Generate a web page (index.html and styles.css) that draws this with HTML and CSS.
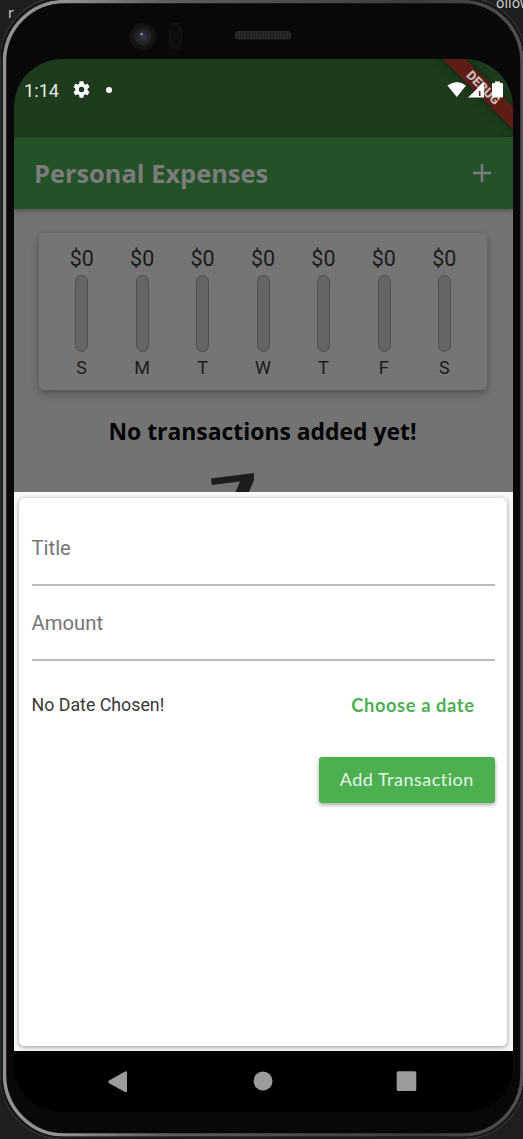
FILE: index.html
```html
<!DOCTYPE html>
<html lang="en">
<head>
<meta charset="utf-8">
<title>Personal Expenses</title>
<link rel="stylesheet" href="styles.css">
</head>
<body>
<div class="stage">
  <svg class="frame" width="523" height="1139" viewBox="0 0 523 1139" fill="none">
    <defs>
      <linearGradient id="rim" x1="0" y1="0" x2="1" y2="0">
        <stop offset="0" stop-color="#929292"/><stop offset=".12" stop-color="#929292"/><stop offset=".3" stop-color="#606060"/><stop offset=".8" stop-color="#3c3c3e"/><stop offset="1" stop-color="#505052"/>
      </linearGradient>
      <radialGradient id="lens"><stop offset="0" stop-color="#3a3b46"/><stop offset=".35" stop-color="#24252b"/><stop offset=".6" stop-color="#222"/><stop offset=".65" stop-color="#161616"/><stop offset="1" stop-color="#121212"/></radialGradient>
      <pattern id="mesh" width="3" height="3" patternUnits="userSpaceOnUse"><rect width="3" height="3" fill="#2b2b2b"/><rect width="1" height="3" fill="#1b1b1b"/></pattern>
    </defs>
    <rect x="0.5" y="-3" width="525" height="1142" rx="62" fill="#08080a" stroke="#45484c"/>
    <rect x="4.500" y="1.500" width="517.500" height="1133.500" rx="60" fill="#08080b" stroke="url(#rim)" stroke-width="3.500"/>
    <rect x="1.500" y="-1" width="523" height="1138.500" rx="61" stroke="#17191b" stroke-width="2"/>
    <circle cx="143" cy="36.500" r="13.500" fill="url(#lens)"/>
    <circle cx="144" cy="37.500" r="2.500" fill="#30364f"/><circle cx="141.500" cy="34" r="1.200" fill="#a5a5b4"/>
    <rect x="169.500" y="23" width="12" height="26" rx="6" fill="#0e0e10" stroke="#141416"/>
    <circle cx="175.500" cy="28.500" r="4" fill="#0a0a0b" stroke="#151517"/><circle cx="175.500" cy="42.500" r="4" fill="#0a0a0b" stroke="#151517"/>
    <rect x="235.500" y="31.500" width="55" height="7.500" rx="2.500" fill="url(#mesh)" stroke="#292929"/>
  </svg>
  <span class="behind behind-left">r</span>
  <span class="behind behind-right">ollow</span>

  <main class="screen">
    <header class="status">
      <span class="clock">1:14</span>
      <svg class="gear" width="17" height="17" viewBox="2 2 20 20"><path fill="#fff" d="M19.140 12.940c.04-.3.060-.610.060-.940 0-.320-.020-.640-.070-.940l2.030-1.580c.180-.140.230-.410.120-.610l-1.920-3.320c-.120-.220-.370-.290-.590-.220l-2.390.960c-.5-.380-1.030-.7-1.620-.940l-.360-2.540c-.040-.240-.240-.410-.480-.410h-3.840c-.240 0-.430.170-.470.410l-.360 2.540c-.590.240-1.130.570-1.620.940l-2.390-.960c-.220-.080-.470 0-.590.220L2.740 8.870c-.120.210-.080.470.120.610l2.030 1.580c-.050.3-.090.630-.090.940s.020.640.070.940l-2.030 1.580c-.180.140-.230.410-.120.610l1.920 3.320c.120.220.370.290.590.220l2.390-.960c.5.380 1.030.7 1.620.940l.360 2.540c.050.240.240.410.480.410h3.840c.240 0 .440-.170.470-.410l.360-2.540c.590-.240 1.130-.560 1.620-.940l2.390.960c.220.080.470 0 .590-.220l1.920-3.320c.120-.220.070-.470-.120-.610zM12 15.200A3.200 3.200 0 1 1 12 8.800a3.200 3.200 0 0 1 0 6.400z"/></svg>
      <span class="dot"></span>
      <span class="spacer"></span>
      <svg class="signals" width="57" height="18" viewBox="0 0 57 18" fill="#fff">
        <path d="M.5 4.500Q9.700-2.500 19 4.500L9.800 16Z"/>
        <path fill-rule="evenodd" d="M21 16.500 37 1V16.500ZM32 10h1.500v5H32Z"/>
        <path d="M46 2h2V.500h5V2h2q1 0 1 1v12.500q0 1-1 1h-9q-1 0-1-1V3q0-1 1-1Z"/>
      </svg>
      <span class="debug">DEBUG</span>
    </header>
    <div class="appbar">
      <h1>Personal Expenses</h1>
      <svg width="18" height="18" viewBox="0 0 18 18"><path d="M9 0v18M0 9h18" stroke="#7c7c7c" stroke-width="2.400"/></svg>
    </div>
    <section class="home">
      <div class="chart">
        <div class="day"><span>$0</span><i></i><b>S</b></div>
        <div class="day"><span>$0</span><i></i><b>M</b></div>
        <div class="day"><span>$0</span><i></i><b>T</b></div>
        <div class="day"><span>$0</span><i></i><b>W</b></div>
        <div class="day"><span>$0</span><i></i><b>T</b></div>
        <div class="day"><span>$0</span><i></i><b>F</b></div>
        <div class="day"><span>$0</span><i></i><b>S</b></div>
      </div>
      <h2>No transactions added yet!</h2>
      <svg class="zed" width="46" height="20" viewBox="0 0 46 20"><path fill="#1d1d1d" d="M0 5.500 43 0V7L37.500 20H24L29 8.500 1 12Z"/></svg>
    </section>
    <section class="sheet">
      <form class="card">
        <div class="field">Title</div>
        <div class="field">Amount</div>
        <div class="date-row"><span>No Date Chosen!</span><span class="choose">Choose a date</span></div>
        <div class="add">Add Transaction</div>
      </form>
    </section>
    <nav class="navbar">
      <svg width="499" height="61" viewBox="0 0 499 61" fill="#9b9b9b"><path d="M95.500 29.300 111 20.500q2-1 2 1V40q0 2-2 1L95.500 32.500q-2.500-1.600 0-3.200Z"/><circle cx="249" cy="30" r="9.500"/><rect x="382.700" y="20.300" width="19.600" height="19.600" rx="1.500"/></svg>
    </nav>
  </main>
</div>
</body>
</html>
```
FILE: styles.css
```css
* { box-sizing: border-box; }
body { margin: 0; background: #1e1e1e; font-family: Roboto, sans-serif; }
.stage { position: relative; width: 523px; height: 1139px; padding: 59px 10px 27px 14px; overflow: hidden; }
.frame { position: absolute; left: 0; top: 0; }
.behind { position: absolute; color: #ccc; font: 14px/16px "Noto Sans", sans-serif; }
.behind-left { left: 8px; top: 5px; }
.behind-right { left: 496px; top: -5px; }
.screen { position: relative; display: flex; flex-direction: column; width: 499px; height: 1053px; border-radius: 48px; overflow: hidden; background: #000; }
.status { position: relative; height: 78px; flex: none; display: flex; align-items: flex-start; padding: 22px 9px 0 10px; background: #1e3b1d; color: #fff; overflow: hidden; }
.clock { width: 49px; font-size: 18.200px; line-height: 20px; color: #e8ece8; }
.gear { flex: none; }
.dot { width: 6px; height: 6px; margin: 6px 0 0 16px; border-radius: 50%; background: #fff; }
.spacer { flex: 1; }
.signals { position: relative; z-index: 1; }
.debug { position: absolute; left: 409px; top: 21px; width: 120px; height: 16px; transform: rotate(45deg); background: #5d1c15; box-shadow: 0 0 8px #0a260f; color: #c8bbb9; font-weight: 900; font-size: 13px; line-height: 16px; text-align: center; }
.appbar { position: relative; z-index: 1; height: 72px; flex: none; display: flex; justify-content: space-between; align-items: center; padding: 0 22px 0 20px; background: #235128; box-shadow: 0 1px 5px rgba(0,0,0,.4); }
h1 { margin: 0; font: 700 25.400px/36px "Open Sans", sans-serif; color: #7c7c7c; }
.home { height: 283px; flex: none; padding: 24px 26px 0 25px; background: #737373; display: flex; flex-direction: column; overflow: hidden; }
.chart { height: 157px; flex: none; display: flex; padding: 13px 12.500px 0; border-radius: 5px; background: #757575; box-shadow: 0 3px 8px rgba(0,0,0,.3); }
.day { flex: 1; display: flex; flex-direction: column; align-items: center; color: #1b1b1b; }
.day span { font-size: 21.500px; line-height: 25px; }
.day i { width: 13px; height: 77px; margin: 4px 0 0 .5px; border: 1px solid #4e4e4e; border-radius: 7px; background: #656565; }
.day b { font-weight: 400; font-size: 18px; line-height: 21px; margin-top: 5px; }
h2 { margin: 26px 1px 0 0; flex: none; font: 700 22.900px/32px "Open Sans", sans-serif; color: #030303; text-align: center; }
.zed { margin: 25px 0 0 172px; flex: none; }
.sheet { height: 559px; flex: none; padding: 6px 6px 5px 5px; background: #f8f8f8; }
.card { height: 548px; padding: 0 12.500px; border-radius: 5px; background: #fff; box-shadow: 0 1px 4px rgba(0,0,0,.4); display: flex; flex-direction: column; }
.field { height: 75px; padding-top: 24px; border-bottom: 2px solid #bcbcbc; font-size: 20.300px; line-height: 26px; color: #757575; }
.field:first-child { height: 88px; padding-top: 37px; }
.date-row { display: flex; justify-content: space-between; align-items: center; height: 87px; padding-right: 20px; font-size: 17.800px; color: #383838; }
.choose { font: 700 18.300px/24px Lato, sans-serif; letter-spacing: .6px; color: #4caf50; }
.add { align-self: flex-end; width: 175.500px; height: 46px; margin-top: 9px; border-radius: 3px; background: #4caf50; box-shadow: 0 2px 4px rgba(0,0,0,.35); color: #e6f4e6; font: 400 18px/45px Lato, sans-serif; letter-spacing: .5px; text-align: center; }
.navbar { height: 61px; flex: none; background: #000; }
```
